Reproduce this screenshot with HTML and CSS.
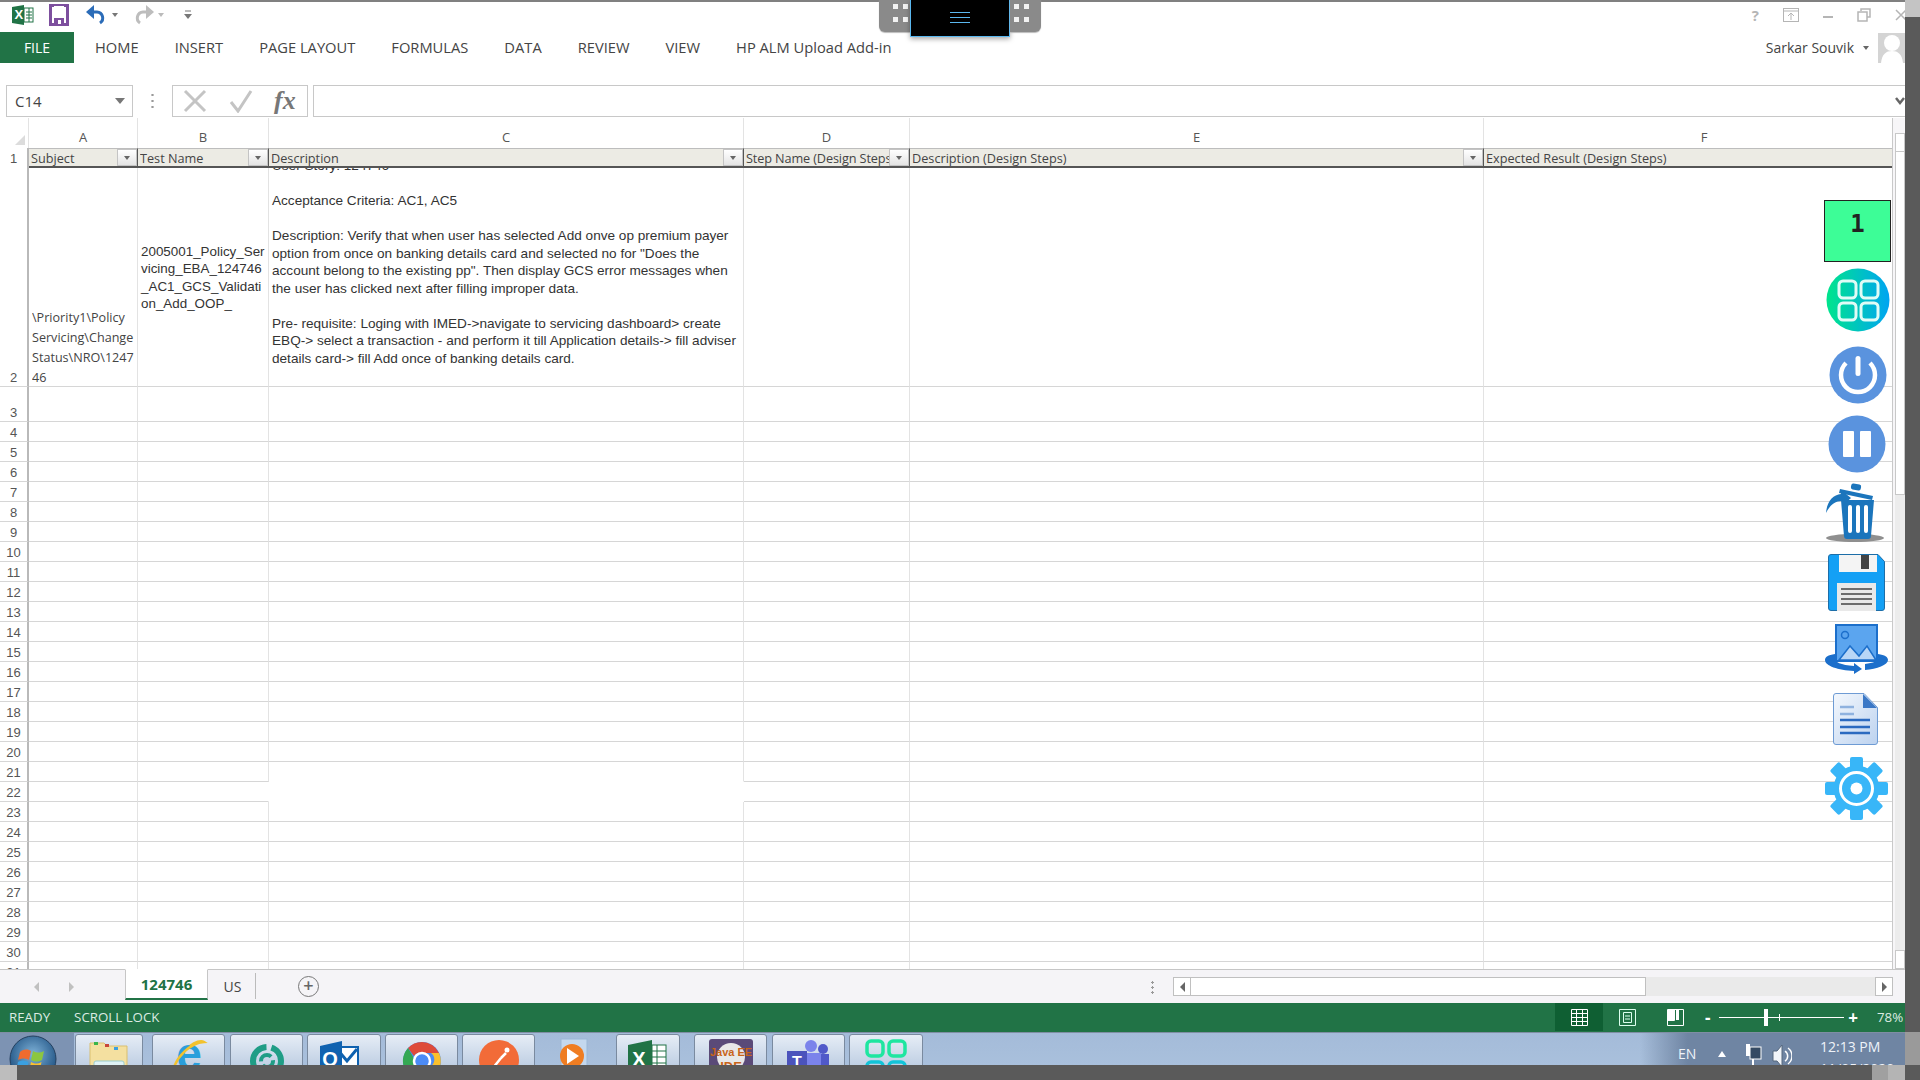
FILE: index.html
```html
<!DOCTYPE html>
<html lang="en">
<head>
<meta charset="utf-8">
<title>Excel</title>
<link rel="stylesheet" href="styles.css">
</head>
<body>
<div class="screen">
  <div class="upper">
    <div class="app">
      <header class="titlebar">
        <div class="qat">
          <svg class="q-xl" width="22" height="20" viewBox="0 0 22 20"><path d="M0 2 12 0v20L0 18z" fill="#217346"/><rect x="12" y="3" width="9" height="14" fill="#fff" stroke="#217346"/><path d="M14 7h6M14 10h6M14 13h6M17 3v14" stroke="#217346"/><text x="2.5" y="14" class="q-x">X</text></svg>
          <svg class="q-save" width="20" height="22" viewBox="0 0 20 22"><path d="M1.500 1.500h17v19h-17z" fill="#fff" stroke="#7d4f9e" stroke-width="3"/><rect x="5" y="2" width="10" height="7" fill="#fff"/><rect x="5" y="14" width="10" height="7" fill="#7d4f9e"/><rect x="9" y="16" width="3" height="4" fill="#fff"/></svg>
          <svg class="q-undo" width="24" height="22" viewBox="0 0 24 22"><path d="M3 8h9a6 6 0 0 1 3 11" fill="none" stroke="#2b6cb8" stroke-width="3"/><path d="M9 1 1 8l8 7z" fill="#2b6cb8"/></svg>
          <span class="q-tri"></span>
          <svg class="q-redo" width="24" height="22" viewBox="0 0 24 22"><path d="M21 8h-9a6 6 0 0 0-3 11" fill="none" stroke="#bdbdbd" stroke-width="3"/><path d="M15 1l8 7-8 7z" fill="#bdbdbd"/></svg>
          <span class="q-tri light"></span>
          <svg class="q-more" width="8" height="10" viewBox="0 0 8 10"><path d="M1 1h6" stroke="#777"/><path d="M0 4h8L4 9z" fill="#777"/></svg>
        </div>
        <div class="winctl">
          <span class="help">?</span>
          <svg width="16" height="14" viewBox="0 0 16 14"><rect x=".5" y=".5" width="15" height="13" fill="none" stroke="#b5b5b5"/><path d="M1 3h14M8 12V6M5 8l3-3 3 3" fill="none" stroke="#b5b5b5"/></svg>
          <svg width="10" height="14" viewBox="0 0 10 14"><path d="M0 9h10" stroke="#b5b5b5" stroke-width="2"/></svg>
          <svg width="14" height="14" viewBox="0 0 14 14"><path d="M4 3V1h9v8h-3M1 4h9v9H1z" fill="none" stroke="#b5b5b5" stroke-width="1.500"/></svg>
          <svg width="12" height="14" viewBox="0 0 12 14"><path d="M1 2l10 10M11 2 1 12" stroke="#b5b5b5" stroke-width="1.500"/></svg>
        </div>
      </header>

      <nav class="tabs">
        <div class="file-tab">FILE</div>
        <div class="tab-list">
          <span>HOME</span><span>INSERT</span><span>PAGE LAYOUT</span><span>FORMULAS</span><span>DATA</span><span>REVIEW</span><span>VIEW</span><span>HP ALM Upload Add-in</span>
        </div>
        <div class="user">
          <span>Sarkar Souvik</span><i class="caret"></i>
          <svg width="27" height="30" viewBox="0 0 27 30"><rect width="27" height="30" fill="#d4d4d4"/><circle cx="14" cy="10" r="8" fill="#fff"/><path d="M3 30c1-9 5-12 11-12s10 3 11 12z" fill="#fff"/></svg>
        </div>
      </nav>

      <section class="formula">
        <div class="namebox"><span>C14</span><i class="caret dark"></i></div>
        <div class="fdots"></div>
        <div class="fbuttons">
          <svg width="24" height="24" viewBox="0 0 24 24"><path d="M2 2l20 20M22 2 2 22" stroke="#c4c4c4" stroke-width="3"/></svg>
          <svg width="24" height="24" viewBox="0 0 24 24"><path d="M2 13l7 9L22 2" fill="none" stroke="#c4c4c4" stroke-width="3"/></svg>
          <span class="fx">fx</span>
        </div>
        <div class="finput"><svg width="10" height="8" viewBox="0 0 10 8"><path d="M1 1l4 5 4-5" fill="none" stroke="#666" stroke-width="2.500"/></svg></div>
      </section>

      <section class="sheet">
        <div class="gridwrap">
          <table class="grid">
            <colgroup><col class="c0"><col class="c1"><col class="c2"><col class="c3"><col class="c4"><col class="c5"><col class="c6"></colgroup>
            <thead>
              <tr class="letters"><th class="corner"><i></i></th><th>A</th><th>B</th><th>C</th><th>D</th><th>E</th><th>F</th></tr>
            </thead>
            <tbody>
              <tr class="r1">
                <th>1</th>
                <td><div class="hd"><span>Subject</span><b class="flt"></b></div></td>
                <td><div class="hd"><span>Test Name</span><b class="flt"></b></div></td>
                <td><div class="hd"><span>Description</span><b class="flt"></b></div></td>
                <td><div class="hd tight"><span>Step Name (Design Steps)</span><b class="flt"></b></div></td>
                <td><div class="hd"><span>Description (Design Steps)</span><b class="flt"></b></div></td>
                <td><div class="hd"><span>Expected Result (Design Steps)</span></div></td>
              </tr>
              <tr class="r2">
                <th>2</th>
                <td class="t-a"><div class="t-a-in">\Priority1\Policy<br>Servicing\Change<br>Status\NRO\1247<br>46</div></td>
                <td class="t-b">2005001_Policy_Servicing_EBA_124746_AC1_GCS_Validation_Add_OOP_</td>
                <td class="t-c"><div class="clip"><p>User Story: 124746</p><p>Acceptance Criteria: AC1, AC5</p><p>Description: Verify that when user has selected Add onve op premium payer<br>option from once on banking details card and selected no for "Does the<br>account belong to the existing pp". Then display GCS error messages when<br>the user has clicked next after filling improper data.</p><p>Pre- requisite: Loging with IMED-&gt;navigate to servicing dashboard&gt; create<br>EBQ-&gt; select a transaction - and perform it till Application details-&gt; fill adviser<br>details card-&gt; fill Add once of banking details card.</p></div></td>
                <td></td><td></td><td></td>
              </tr>
              <tr class="r3"><th>3</th><td></td><td></td><td></td><td></td><td></td><td></td></tr>
              <tr><th>4</th><td></td><td></td><td></td><td></td><td></td><td></td></tr>
              <tr><th>5</th><td></td><td></td><td></td><td></td><td></td><td></td></tr>
              <tr><th>6</th><td></td><td></td><td></td><td></td><td></td><td></td></tr>
              <tr><th>7</th><td></td><td></td><td></td><td></td><td></td><td></td></tr>
              <tr><th>8</th><td></td><td></td><td></td><td></td><td></td><td></td></tr>
              <tr><th>9</th><td></td><td></td><td></td><td></td><td></td><td></td></tr>
              <tr><th>10</th><td></td><td></td><td></td><td></td><td></td><td></td></tr>
              <tr><th>11</th><td></td><td></td><td></td><td></td><td></td><td></td></tr>
              <tr><th>12</th><td></td><td></td><td></td><td></td><td></td><td></td></tr>
              <tr><th>13</th><td></td><td></td><td></td><td></td><td></td><td></td></tr>
              <tr><th>14</th><td></td><td></td><td></td><td></td><td></td><td></td></tr>
              <tr><th>15</th><td></td><td></td><td></td><td></td><td></td><td></td></tr>
              <tr><th>16</th><td></td><td></td><td></td><td></td><td></td><td></td></tr>
              <tr><th>17</th><td></td><td></td><td></td><td></td><td></td><td></td></tr>
              <tr><th>18</th><td></td><td></td><td></td><td></td><td></td><td></td></tr>
              <tr><th>19</th><td></td><td></td><td></td><td></td><td></td><td></td></tr>
              <tr><th>20</th><td></td><td></td><td></td><td></td><td></td><td></td></tr>
              <tr><th>21</th><td></td><td></td><td class="nb"></td><td></td><td></td><td></td></tr>
              <tr><th>22</th><td></td><td class="nr"></td><td class="nb nr"></td><td></td><td></td><td></td></tr>
              <tr><th>23</th><td></td><td></td><td></td><td></td><td></td><td></td></tr>
              <tr><th>24</th><td></td><td></td><td></td><td></td><td></td><td></td></tr>
              <tr><th>25</th><td></td><td></td><td></td><td></td><td></td><td></td></tr>
              <tr><th>26</th><td></td><td></td><td></td><td></td><td></td><td></td></tr>
              <tr><th>27</th><td></td><td></td><td></td><td></td><td></td><td></td></tr>
              <tr><th>28</th><td></td><td></td><td></td><td></td><td></td><td></td></tr>
              <tr><th>29</th><td></td><td></td><td></td><td></td><td></td><td></td></tr>
              <tr><th>30</th><td></td><td></td><td></td><td></td><td></td><td></td></tr>
              <tr><th>31</th><td></td><td></td><td></td><td></td><td></td><td></td></tr>
            </tbody>
          </table>
        </div>
        <div class="vscroll">
          <div class="vbtn"></div>
          <div class="vthumb"></div>
          <div class="vtrack"></div>
          <div class="vbtn"></div>
        </div>
      </section>

      <section class="sheetbar">
        <div class="nav-arrows"><i class="arr-l"></i><i class="arr-r"></i></div>
        <div class="sheet-active">124746</div>
        <div class="sheet-other">US</div>
        <div class="sheet-add">+</div>
        <div class="vdots"></div>
        <div class="hscroll">
          <div class="hbtn"><i class="arr-l dark"></i></div>
          <div class="hthumb"></div>
          <div class="htrack"></div>
          <div class="hbtn"><i class="arr-r dark"></i></div>
        </div>
      </section>

      <footer class="status">
        <span class="st-ready">READY</span>
        <span>SCROLL LOCK</span>
        <div class="st-right">
          <div class="view on"><svg width="17" height="17" viewBox="0 0 17 17"><path d="M.5.5h16v16H.500zM.5 4.500h16M.5 8.500h16M.5 12.500h16M5.500.5v16M11.500.5v16" fill="none" stroke="#fff"/></svg></div>
          <div class="view"><svg width="17" height="17" viewBox="0 0 17 17"><path d="M.5.5h16v16H.500z" fill="none" stroke="#dfe" /><path d="M4.500 3.500h8v10h-8zM6 7h5M6 10h5" fill="none" stroke="#dfe"/></svg></div>
          <div class="view"><svg width="17" height="17" viewBox="0 0 17 17"><path d="M.5.5h16v16H.500zM.5 11.500h7M7.500.5v11" fill="none" stroke="#fff"/><path d="M1 1h6v10H1zM9 1h3v10H9z" fill="#fff"/></svg></div>
          <div class="zoomer">
            <span class="zm">-</span>
            <div class="slider"><i class="tick"></i><i class="thumb"></i></div>
            <span class="zm plus">+</span>
          </div>
          <span class="pct">78%</span>
        </div>
      </footer>

      <footer class="taskbar">
        <div class="start">
          <svg width="48" height="48" viewBox="0 0 48 48"><defs><radialGradient id="orb" cx=".5" cy=".4" r=".6"><stop offset="0" stop-color="#7fb2d8"/><stop offset="1" stop-color="#1c4f80"/></radialGradient></defs><circle cx="24" cy="24" r="23" fill="url(#orb)" stroke="#24405f"/><path d="M11 17c4-3 7-3 11-1l-2 9c-4-2-7-2-11 0z" fill="#ef6b2e"/><path d="M24 16c4 2 7 2 11 0l-2 9c-4 2-7 2-11 0z" fill="#8cc63f"/><path d="M9 27c4-2 7-2 10.500 0l-2 9c-4-2-7-2-10.500 0z" fill="#3b9fe0"/><path d="M22 27c4 2 7 2 10.500 0l-2 9c-4 2-7 2-10.500 0z" fill="#fbc02d"/></svg>
        </div>
        <div class="tb a"><svg width="42" height="36" viewBox="0 0 42 36"><path d="M2 4h14l3 3h20v26H2z" fill="#f4e0a0" stroke="#d9bf70"/><rect x="6" y="3" width="4" height="3" fill="#3bb54a"/><rect x="17" y="5" width="4" height="3" fill="#c8473a"/><rect x="26" y="8" width="4" height="3" fill="#3b9fe0"/><rect x="6" y="22" width="30" height="12" rx="2" fill="#dff1f5" stroke="#9cc"/></svg></div>
        <div class="tb b"><svg width="38" height="36" viewBox="0 0 38 36"><text x="19" y="31" class="ie">e</text><path d="M3 32C6 18 20 4 34 3 31 1 25 3 20 7" fill="none" stroke="#f2c22e" stroke-width="2.500"/></svg></div>
        <div class="tb c"><svg width="40" height="36" viewBox="0 0 40 36"><circle cx="20" cy="22" r="14" fill="none" stroke="#1f9d86" stroke-width="6" stroke-dasharray="30 5"/><circle cx="20" cy="22" r="6" fill="none" stroke="#1f9d86" stroke-width="4" stroke-dasharray="14 4"/></svg></div>
        <div class="tb d"><svg width="40" height="36" viewBox="0 0 40 36"><path d="M16 8h22v24H16z" fill="#fff" stroke="#0f62b0" stroke-width="2"/><path d="M17 10l10 12 10-12" fill="none" stroke="#0f62b0" stroke-width="3"/><path d="M0 7 22 2v34H0z" fill="#0f62b0"/><text x="10" y="27" class="ol">O</text></svg></div>
        <div class="tb e"><svg width="40" height="36" viewBox="0 0 40 36"><circle cx="20" cy="22" r="19" fill="#4c8bf5"/><path d="M20 3a19 19 0 0 1 17 11H20a8 8 0 0 0-8 3L6 9A19 19 0 0 1 20 3z" fill="#de4b3a"/><path d="M37 14a19 19 0 0 1-16 27l8-14a8 8 0 0 0 0-13z" fill="#fbc02d"/><path d="M6 9l8 14 6 7-6 10A19 19 0 0 1 6 9z" fill="#34a853"/><circle cx="20" cy="22" r="8" fill="#4c8bf5" stroke="#fff" stroke-width="2.500"/></svg></div>
        <div class="tb f"><svg width="40" height="40" viewBox="0 0 40 40"><circle cx="20" cy="21" r="20" fill="#f26b38"/><path d="M10 34l12-15M22 19l5-5" stroke="#fff" stroke-width="2.500"/><circle cx="28" cy="11" r="2.500" fill="#fff"/></svg></div>
        <div class="tb-plain"><svg width="34" height="36" viewBox="0 0 34 36"><rect x="4" y="2" width="26" height="34" fill="#c4d8ee" stroke="#9bb8d6"/><circle cx="15" cy="19" r="12" fill="#ef7d22"/><path d="M10 11l12 8-12 8z" fill="#fff"/></svg></div>
        <div class="tb g"><svg width="40" height="36" viewBox="0 0 40 36"><rect x="20" y="6" width="18" height="30" fill="#fff" stroke="#217346"/><path d="M24 6v30M29 6v30M20 12h18M20 18h18M20 24h18" stroke="#217346"/><path d="M0 6 24 1v35H0z" fill="#217346"/><text x="11" y="27" class="ol">X</text></svg></div>
        <div class="tb h"><svg width="44" height="38" viewBox="0 0 44 38"><rect width="44" height="38" rx="3" fill="#5a4a78"/><circle cx="22" cy="18" r="14" fill="#e8e8e8"/><text x="22" y="17" class="jv">Java EE</text><text x="22" y="32" class="jv lg">IDE</text></svg></div>
        <div class="tb i"><svg width="44" height="38" viewBox="0 0 44 38"><circle cx="24" cy="7" r="6" fill="#7b83eb"/><circle cx="36" cy="10" r="5" fill="#5059c9"/><rect x="28" y="15" width="14" height="23" fill="#5059c9"/><rect x="14" y="14" width="20" height="24" fill="#7b83eb"/><rect x="0" y="12" width="20" height="22" fill="#4b53bc"/><text x="10" y="29" class="ol sm">T</text></svg></div>
        <div class="tb j"><svg width="42" height="38" viewBox="0 0 42 38"><rect x="2" y="2" width="16" height="15" rx="4" fill="none" stroke="#1ee6a0" stroke-width="3.500"/><rect x="24" y="2" width="16" height="15" rx="4" fill="none" stroke="#1ee6a0" stroke-width="3.500"/><rect x="2" y="23" width="16" height="15" rx="4" fill="none" stroke="#12c4d8" stroke-width="3.500"/><rect x="24" y="23" width="16" height="15" rx="4" fill="none" stroke="#12c4d8" stroke-width="3.500"/></svg></div>
        <div class="tray">
          <span class="lang">EN</span>
          <i class="tray-up"></i>
          <svg width="18" height="26" viewBox="0 0 18 26"><rect x="2" y="1" width="4" height="12" fill="#fff"/><rect x="6" y="4" width="11" height="12" fill="#354a63" stroke="#fff"/><path d="M9 16v8M4 24h10" stroke="#fff" stroke-width="2"/></svg>
          <svg width="20" height="26" viewBox="0 0 20 26"><path d="M1 8h4l5-6v22l-5-6H1z" fill="#f2f5f9" stroke="#55677d"/><path d="M13 8a6 6 0 0 1 0 10M16 5a10 10 0 0 1 0 16" fill="none" stroke="#fff" stroke-width="1.500"/></svg>
          <div class="clock"><span>12:13 PM</span><span>11/05/2020</span></div>
        </div>
      </footer>
    </div>
    <aside class="strip"><div class="strip-top"></div><div class="strip-mid"></div><div class="strip-low"></div></aside>
  </div>
  <div class="bottombar"><i class="b-left"></i><i class="b-r1"></i><i class="b-r2"></i></div>

  <div class="handle">
    <div class="grip"><i></i><i></i><i></i><i></i></div>
    <div class="handle-core"><span></span><span></span><span></span></div>
    <div class="grip"><i></i><i></i><i></i><i></i></div>
  </div>

  <div class="tools">
    <div class="counter">1</div>
    <svg class="t-grid" width="64" height="64" viewBox="0 0 64 64"><defs><linearGradient id="gg" x1="0" x2="1" y1="0" y2="0"><stop offset="0" stop-color="#00e58c"/><stop offset="1" stop-color="#00a4f2"/></linearGradient></defs><circle cx="32" cy="32" r="31.500" fill="url(#gg)"/><g fill="none" stroke="#dffcf6" stroke-width="3"><rect x="13" y="13" width="17" height="17" rx="4"/><rect x="35" y="13" width="17" height="17" rx="4"/><rect x="13" y="35" width="17" height="17" rx="4"/><rect x="35" y="35" width="17" height="17" rx="4"/></g></svg>
    <svg class="t-power" width="58" height="58" viewBox="0 0 58 58"><circle cx="29" cy="29" r="28.500" fill="#5a93de"/><path d="M17 17a17 17 0 1 0 24 0" fill="none" stroke="#fff" stroke-width="4.500"/><rect x="26.500" y="10" width="5" height="20" rx="2.500" fill="#fff"/></svg>
    <svg class="t-pause" width="58" height="58" viewBox="0 0 58 58"><circle cx="29" cy="29" r="28.500" fill="#5a93de"/><rect x="15" y="16" width="11" height="26" rx="1" fill="#fff"/><rect x="32" y="16" width="11" height="26" rx="1" fill="#fff"/></svg>
    <svg class="t-trash" width="60" height="60" viewBox="0 0 60 60"><ellipse cx="30" cy="55" rx="29" ry="4" fill="#8f8f8f"/><path d="M16 17h33l-3 36a3 3 0 0 1-3 3H22a3 3 0 0 1-3-3z" fill="#1b75bc"/><g fill="#fff"><rect x="23" y="22" width="4" height="28" rx="2"/><rect x="31" y="22" width="4" height="28" rx="2"/><rect x="39" y="22" width="4" height="28" rx="2"/></g><path d="M15 6l33 7-1 4-33-7z" fill="#1b75bc"/><rect x="26" y="1" width="10" height="6" rx="2" transform="rotate(10 31 4)" fill="#1b75bc"/><path d="M1 30C2 18 8 12 16 11l0-4 10 8-9 8v-5C10 18 5 22 1 30z" fill="#1b75bc"/></svg>
    <svg class="t-save" width="57" height="57" viewBox="0 0 57 57"><path d="M3 .5h47l6.500 7V54a2.500 2.500 0 0 1-2.500 2.500H3A2.500 2.500 0 0 1 .5 54V3A2.500 2.500 0 0 1 3 .5z" fill="#14a0f5" stroke="#1d6ea8"/><rect x="11" y="1" width="38" height="17" fill="#f4f4f4"/><rect x="33" y="1" width="8" height="14" fill="#444"/><rect x="9" y="29" width="39" height="28" fill="#e9e9e9"/><g stroke="#444" stroke-width="1.500"><path d="M13 35h31M13 40h31M13 45h31M13 50h31"/></g></svg>
    <svg class="t-image" width="63" height="54" viewBox="0 0 63 54"><path d="M10 30C3 31 0 33 0 36c0 6 13 10 29 11v3l8-5-8-6v3C16 41 9 38 10 34z" fill="#1c6fcb"/><path d="M53 30c7 1 10 3 10 6 0 5-11 9-23 10v-6c8-1 14-3 13-6z" fill="#1c6fcb"/><rect x="11" y="1" width="41" height="36" fill="#5ba5ef" stroke="#1c6fcb" stroke-width="2"/><circle cx="20" cy="11" r="3.500" fill="none" stroke="#1c6fcb" stroke-width="1.500"/><path d="M14 36l11-14 9 10 8-10 9 14z" fill="#b8d6f6" stroke="#1c6fcb" stroke-width="1.500"/></svg>
    <svg class="t-doc" width="45" height="52" viewBox="0 0 45 52"><defs><linearGradient id="dg" x1="0" x2="1" y1="0" y2="1"><stop offset="0" stop-color="#f4f8fd"/><stop offset="1" stop-color="#bcd2ef"/></linearGradient></defs><path d="M3 .5h28l13.500 14V49a2.500 2.500 0 0 1-2.500 2.500H3A2.500 2.500 0 0 1 .5 49V3A2.500 2.500 0 0 1 3 .5z" fill="url(#dg)" stroke="#6e9bd4"/><path d="M30 1v14h14z" fill="#3b78c6"/><g stroke="#2b6ac0" stroke-width="2.500"><path d="M7 14h14M7 21h14" stroke="#8fb2df"/><path d="M7 27h30M7 34h30M7 40h30"/></g></svg>
    <svg class="t-gear" width="63" height="63" viewBox="0 0 63 63"><g fill="#38b6f8"><circle cx="31.500" cy="31.500" r="23"/><rect x="25" y="0" width="13" height="63" rx="2"/><rect x="25" y="0" width="13" height="63" rx="2" transform="rotate(45 31.500 31.500)"/><rect x="25" y="0" width="13" height="63" rx="2" transform="rotate(90 31.500 31.500)"/><rect x="25" y="0" width="13" height="63" rx="2" transform="rotate(135 31.500 31.500)"/></g><circle cx="31.500" cy="31.500" r="16" fill="none" stroke="#fff" stroke-width="3"/><circle cx="31.500" cy="31.500" r="6" fill="#fff"/></svg>
  </div>
</div>
</body>
</html>
```

FILE: styles.css
```css
* { box-sizing: border-box; }
html, body { margin: 0; padding: 0; }
body { background: #5a5a5a; font-family: "Open Sans", "Liberation Sans", sans-serif; color: #444; }
.screen { position: relative; width: 1920px; height: 1080px; overflow: hidden; display: flex; flex-direction: column; }
.upper { display: flex; height: 1065px; }
.app { width: 1905px; display: flex; flex-direction: column; background: #fff; }

/* Title bar */
.titlebar { height: 32px; border-top: 2px solid #808080; display: flex; justify-content: space-between; align-items: center; padding: 0 0 4px 12px; }
.qat { display: flex; align-items: center; }
.q-save { margin-left: 15px; }
.q-undo { margin-left: 16px; }
.q-tri { width: 0; height: 0; margin-left: 3px; border: 3px solid transparent; border-top: 4px solid #777; border-bottom: 0; }
.q-tri.light { border-top-color: #bbb; }
.q-redo { margin-left: 13px; }
.q-more { margin-left: 20px; }
.q-x { font: bold 13px "Liberation Sans", sans-serif; fill: #fff; }
.winctl { display: flex; align-items: center; gap: 24px; margin-right: -2px; }
.help { font: bold 15px "Open Sans", sans-serif; color: #b5b5b5; }

/* Ribbon tabs */
.tabs { height: 31px; display: flex; align-items: center; margin-bottom: 22px; }
.file-tab { width: 74px; height: 31px; background: #217346; color: #fff; font-size: 14px; display: flex; align-items: center; justify-content: center; }
.tab-list { display: flex; gap: 36px; margin-left: 21px; padding-bottom: 1px; font-size: 14.700px; color: #444; white-space: nowrap; }
.user { margin-left: auto; display: flex; align-items: center; font-size: 14px; color: #444; }
.caret { display: block; width: 0; height: 0; margin: 0 9px 0 9px; border: 3.500px solid transparent; border-top: 4px solid #666; border-bottom: 0; }

/* Formula bar */
.formula { height: 32px; display: flex; padding-left: 6px; margin-bottom: 1px; }
.namebox { width: 127px; border: 1px solid #c8c8c8; display: flex; align-items: center; justify-content: space-between; padding-left: 8px; font-size: 15px; color: #444; }
.caret.dark { margin-right: 7px; border-width: 5px; border-top-width: 6px; border-top-color: #777; }
.fdots { width: 39px; background: radial-gradient(circle, #999 1px, transparent 1.300px) center / 3px 6px repeat-y; background-clip: content-box; padding: 8px 0; }
.fbuttons { width: 136px; border: 1px solid #c8c8c8; display: flex; align-items: center; gap: 22px; padding-left: 10px; }
.fx { font: italic 700 26px "Liberation Serif", serif; color: #777; margin-left: -1px; }
.finput { flex: 1; margin-left: 5px; border: 1px solid #c8c8c8; border-right: 0; display: flex; align-items: center; justify-content: flex-end; }

/* Sheet */
.sheet { height: 851px; display: flex; overflow: hidden; }
.gridwrap { width: 1893px; height: 851px; overflow: hidden; border-right: 1px solid #c9c9c9; }
.grid { table-layout: fixed; width: 1893px; border-collapse: separate; border-spacing: 0; font-family: "Liberation Sans", sans-serif; color: #333; }
.c0 { width: 29px; } .c1 { width: 109px; } .c2 { width: 131px; } .c3 { width: 475px; } .c4 { width: 166px; } .c5 { width: 574px; } .c6 { width: 409px; }
.grid th, .grid td { padding: 0; height: 20px; }
.grid td { border-right: 1px solid #e3e3e3; border-bottom: 1px solid #d6d6d6; }
.grid td.nb { border-bottom-color: transparent; }
.grid td.nr { border-right-color: transparent; }
.grid tbody th { font-weight: 400; font-size: 13px; color: #555; vertical-align: bottom; text-align: center; border-right: 2px solid #b9b9b9; border-bottom: 1px solid #d6d6d6; line-height: 17px; }
.letters th { height: 30px; font-family: "Open Sans", sans-serif; font-weight: 400; font-size: 13px; color: #555; border-right: 1px solid #e3e3e3; }
.grid .letters th { padding-top: 7px; }
.grid .letters th:last-child { padding-left: 32px; }
.corner { position: relative; }
.corner i { position: absolute; left: 15px; bottom: 3px; width: 0; height: 0; border-left: 10px solid transparent; border-bottom: 10px solid #dcdcdc; }

.grid .r1 td { height: 20px; background: #ecebe4; border-top: 1px solid #bdbdbd; border-bottom: 2px solid #555; border-right: 1px solid #555; }
.grid tbody .r1 th { height: 20px; line-height: 18px; padding-top: 2px; border-bottom: 0; }
.grid .r1 td:last-child { border-right: 0; }
.hd { display: flex; align-items: flex-start; height: 17px; overflow: hidden; font: 12.700px/19px "Open Sans", sans-serif; color: #444; padding-left: 2px; white-space: nowrap; }
.hd span { overflow: hidden; flex: 1; }
.hd.tight { letter-spacing: -.12px; }
.flt { flex: none; width: 20px; height: 17px; background: linear-gradient(#fff, #e4e4e4); border: 1px solid #c4c4c4; position: relative; }
.flt::after { content: ""; position: absolute; left: 6px; top: 6px; border: 3px solid transparent; border-top: 4px solid #666; border-bottom: 0; }
.r2 td, .r2 th { height: 219px; }
.r3 th { height: 35px; }
.grid .r3 td { height: 35px; }
.grid .t-a { vertical-align: top; padding-left: 3px; color: #444; }
.t-a-in { height: 218px; padding-top: 140px; font: 12.600px/20px "Open Sans", sans-serif; white-space: nowrap; overflow: hidden; }
.grid .t-b { vertical-align: middle; font-size: 13.400px; line-height: 17.500px; padding: 1px 2px 0 3px; word-break: break-all; color: #333; }
.t-c { vertical-align: top; color: #333; font-size: 13.600px; }
.clip { height: 218px; overflow: hidden; display: flex; flex-direction: column; justify-content: flex-end; padding: 0 0 19px 3px; line-height: 17.500px; white-space: nowrap; }
.clip p { margin: 0 0 17.500px; }
.clip p:last-child { margin-bottom: 0; }

/* Vertical scrollbar */
.vscroll { width: 12px; padding: 15px 0 0 2px; display: flex; flex-direction: column; background: #f7f6f8; }
.vbtn { height: 19px; border: 1px solid #c8c8c8; background: #fff; }
.vthumb { height: 343px; border: 1px solid #c8c8c8; border-top: 0; background: #fff; }
.vtrack { height: 455px; background: #ececec; }

/* Sheet tab bar */
.sheetbar { height: 34px; display: flex; align-items: stretch; background: #f5f4f7; border-top: 1px solid #c6c6c6; font-family: "Open Sans", sans-serif; }
.nav-arrows { width: 125px; display: flex; align-items: center; gap: 30px; padding: 0 0 0 34px; }
.arr-l, .arr-r { display: block; width: 0; height: 0; border: 5px solid transparent; }
.arr-l { border-left: 0; border-right: 5px solid #c0c0c0; }
.arr-r { border-right: 0; border-left: 5px solid #c0c0c0; }
.arr-l.dark { border-right-color: #666; }
.arr-r.dark { border-left-color: #666; }
.sheet-active { width: 83px; height: 31px; margin-top: -1px; background: #fff; border: 1px solid #c6c6c6; border-top-color: #fff; border-bottom: 2px solid #217346; color: #217346; font-size: 15px; font-weight: 700; display: flex; align-items: center; justify-content: center; }
.sheet-other { width: 48px; height: 26px; margin-top: 3px; padding-left: 2px; font-size: 14px; color: #444; border-right: 1px solid #bbb; display: flex; align-items: center; justify-content: center; }
.sheet-add { width: 21px; height: 21px; margin: 6px 0 0 42px; border: 1px solid #777; border-radius: 50%; font-size: 18px; line-height: 17px; text-align: center; color: #666; font-weight: 600; }
.vdots { width: 3px; height: 14px; margin: 10px 0 0 832px; background: radial-gradient(circle, #999 1px, transparent 1.300px) 0 0 / 3px 5px repeat-y; }
.hscroll { width: 720px; height: 19px; margin: 7px 0 0 19px; display: flex; }
.hbtn { width: 18px; height: 19px; border: 1px solid #c0c0c0; background: #fff; display: flex; align-items: center; justify-content: center; }
.hthumb { width: 455px; border: 1px solid #c0c0c0; background: #fff; border-left: 0; }
.htrack { flex: 1; background: #eaeaea; }

/* Status */
.status { height: 29px; background: #217346; color: #dcebe3; font-size: 13.300px; display: flex; align-items: center; padding-left: 9px; padding-bottom: 1px; white-space: nowrap; }
.st-ready { margin-right: 24px; }
.st-right { margin-left: auto; display: flex; align-items: center; height: 100%; }
.view { width: 48px; height: 100%; display: flex; align-items: center; justify-content: center; }
.view.on { background: #0f5f33; }
.zoomer { display: flex; align-items: center; margin-left: 6px; width: 160px; }
.zm { font-size: 17px; color: #fff; font-weight: 700; line-height: 1; width: 11px; }
.zm.plus { width: 14px; text-align: center; margin-left: 2px; }
.slider { width: 125px; height: 1px; background: #fff; position: relative; margin-left: 3px; }
.thumb { position: absolute; left: 45px; top: -8px; width: 4px; height: 17px; background: #fff; }
.tick { position: absolute; left: 60px; top: -3px; width: 1px; height: 7px; background: #fff; }
.pct { width: 28px; margin-left: 12px; text-align: left; font-size: 13.300px; }

/* Taskbar */
.taskbar { height: 33px; background: linear-gradient(#a4bbd9, #a9c0dc); display: flex; overflow: hidden; border-top: 1px solid #7f8ea3; }
.start { width: 74px; flex: none; background: #7d93b3; padding: 2px 0 0 9px; }
.tb, .tb-plain { flex: none; height: 40px; display: flex; justify-content: center; padding-top: 4px; overflow: hidden; }
.tb { background: linear-gradient(#e6edf6, #b6c8df); border: 1px solid #7a8a9f; border-radius: 3px 3px 0 0; margin-top: 1px; }
.a { width: 68px; margin-left: 1px; }
.b { width: 73px; margin-left: 9px; }
.c { width: 73px; margin-left: 5px; }
.d { width: 74px; margin-left: 4px; padding-right: 8px; }
.e { width: 73px; margin-left: 4px; }
.f { width: 73px; margin-left: 4px; }
.tb-plain { width: 81px; padding-right: 4px; }
.g { width: 64px; }
.h { width: 73px; margin-left: 14px; }
.i { width: 73px; margin-left: 5px; }
.j { width: 74px; margin-left: 4px; }
.ie { font: 700 46px "Liberation Sans", sans-serif; fill: #2a9fdc; text-anchor: middle; }
.ol { font: 700 20px "Liberation Sans", sans-serif; fill: #fff; text-anchor: middle; }
.ol.sm { font-size: 16px; }
.jv { font: 700 11px "Liberation Sans", sans-serif; fill: #c8641a; text-anchor: middle; }
.jv.lg { font-size: 13px; }
.tray { margin-left: auto; width: 265px; flex: none; display: flex; align-items: flex-start; background: linear-gradient(90deg, rgba(90, 110, 140, 0), #6f85a3 18%, #6f85a3); color: #eef3f9; padding-left: 38px; }
.lang { font-size: 14px; margin-top: 11px; width: 40px; }
.tray-up { width: 0; height: 0; margin-top: 18px; border: 4px solid transparent; border-bottom: 6px solid #fff; border-top: 0; }
.tray svg:first-of-type { margin: 10px 0 0 18px; }
.tray svg:last-of-type { margin: 10px 0 0 10px; }
.clock { display: flex; flex-direction: column; margin: 3px 0 0 28px; font-size: 14px; line-height: 22px; white-space: nowrap; }

/* Right strip */
.strip { width: 15px; display: flex; flex-direction: column; background: #5a5a5a; }
.strip-top { height: 17px; background: #c4c4c4; }
.strip-mid { height: 1015px; }
.strip-low { height: 33px; background: #9a9a9a; }
.bottombar { height: 15px; background: #5a5a5a; display: flex; }
.b-left { width: 17px; background: #bdbdbd; }
.b-r1 { width: 16px; margin-left: auto; background: #a0a0a0; }
.b-r2 { width: 17px; margin-right: 15px; background: #b4b4b4; }

/* Floating presenter handle */
.handle { position: absolute; left: 879px; top: 0; width: 162px; display: flex; align-items: flex-start; }
.grip { width: 31px; height: 32px; background: #8a8a8a; display: grid; grid-template-columns: 5px 5px; gap: 8px 5px; padding: 4px 0 0 14px; border-radius: 0 0 0 6px; box-shadow: 0 1px 1px #bbb; align-content: start; }
.grip:last-child { border-radius: 0 0 6px 0; padding-left: 4px; }
.grip i { background: #f2f2f2; width: 5px; height: 5px; }
.handle-core { width: 100px; height: 37px; background: #000; border: 1px solid #5ab8f0; border-top: 0; box-shadow: 0 2px 5px rgba(0, 0, 0, .35); display: flex; flex-direction: column; align-items: center; gap: 4px; padding-top: 12px; }
.handle-core span { width: 20px; height: 1px; background: #5ab8f0; }

/* Floating tool column */
.tools { position: absolute; left: 1823px; top: 200px; width: 68px; display: flex; flex-direction: column; align-items: center; }
.tools svg { display: block; flex: none; }
.counter { width: 67px; height: 62px; margin-left: 1px; background: #3dfd97; border: 1px solid #222; font: 700 24px "DejaVu Sans Mono", monospace; color: #222; text-align: center; line-height: 46px; }
.t-grid { margin-top: 6px; margin-left: 2px; }
.t-power { margin-top: 14px; margin-left: 2px; }
.t-pause { margin-top: 11px; }
.t-trash { margin-top: 10px; margin-left: -4px; }
.t-save { margin-top: 11px; margin-left: -2px; }
.t-image { margin-top: 13px; margin-left: -2px; }
.t-doc { margin-top: 15px; margin-left: -4px; }
.t-gear { margin-top: 12px; margin-left: -2px; }
```
